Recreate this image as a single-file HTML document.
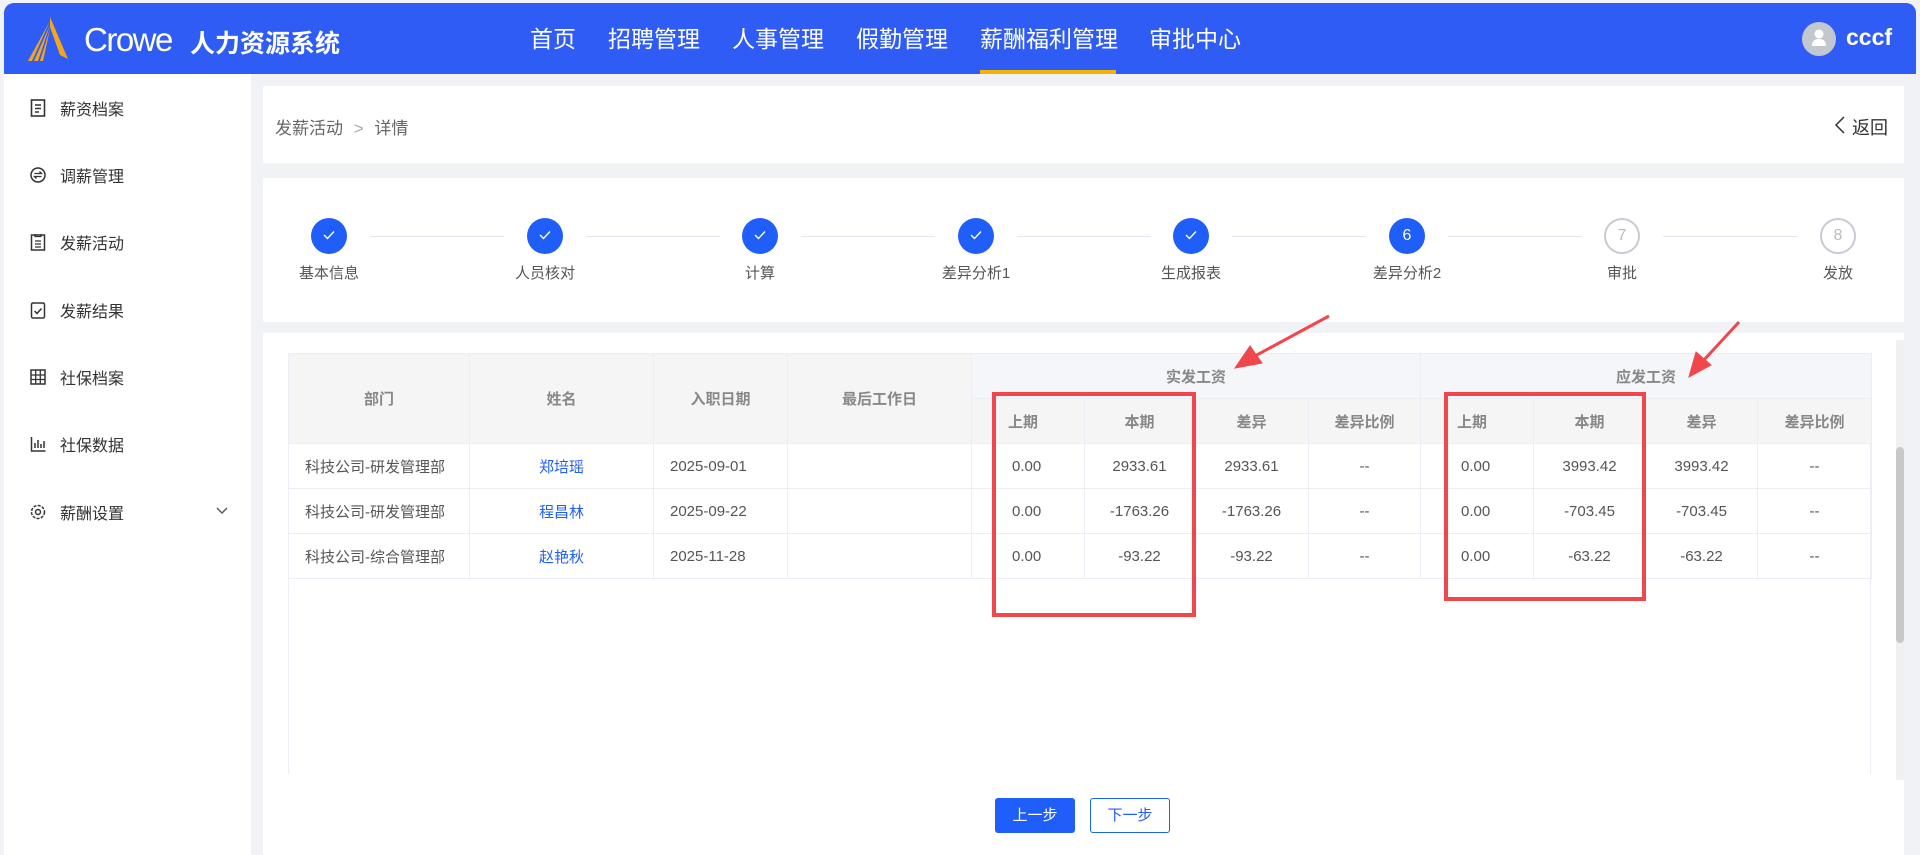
<!DOCTYPE html>
<html><head><meta charset="utf-8"><style>
*{margin:0;padding:0;box-sizing:border-box}
body{width:1920px;height:855px;overflow:hidden;background:#f0f2f5;font-family:"Liberation Sans","Noto Sans CJK SC",sans-serif;position:relative;color:#333}
.abs{position:absolute}
.hdr{left:4px;top:3px;width:1912px;height:71px;background:#305cf6;border-radius:10px 10px 0 0}
.nav{top:20px;color:#fff;font-size:23px;position:absolute}
.side{left:4px;top:74px;width:247px;height:781px;background:#fff}
.mi{position:absolute;left:30px;font-size:16px;color:#333;display:flex;align-items:center}
.mi svg{margin-right:14px}
.card{background:#fff;position:absolute}
.st{position:absolute;width:36px;height:36px;border-radius:50%;top:218px;text-align:center;line-height:36px;font-size:16px;color:#fff;background:#1f5ef9}
.st svg{margin-top:11px}
.st.g{background:#fff;border:2px solid #c6cad3;color:#bbb;line-height:32px}
.sl{position:absolute;top:262px;font-size:15px;color:#555;width:160px;text-align:center}
.ln{position:absolute;top:236px;height:1px;background:#e4e6ee}
table{border-collapse:collapse;position:absolute;left:288px;top:353px;font-size:15px;table-layout:fixed}
td,th{border:1px solid #ebeef5;height:45px;text-align:center;color:#555;font-weight:normal}
th{background:#f5f5f5;color:#888;font-weight:bold}
th.g{background:#f5f6fa}
td.l{text-align:left;padding-left:16px}
td.b{color:#1f5ef9}
.btn{position:absolute;top:798px;height:35px;width:80px;border-radius:3px;font-size:15px;text-align:center;line-height:33px}
</style></head><body>
<div class="abs hdr"></div>
<svg class="abs" style="left:26px;top:17px" width="46" height="44" viewBox="0 0 46 44"><path d="M24 0 L42 42 L34 38 L24 10 Z" fill="#f4a51c"/><path d="M24 4 L2 44 L6 44 Z M24 8 L8 44 L12 44 Z M24 12 L14 44 L17 44Z" fill="#f4a51c"/></svg>
<div class="abs" style="left:84px;top:22px;color:#fff;font-size:33px;letter-spacing:-1.5px;line-height:36px">Crowe</div>
<div class="abs" style="left:190px;top:24px;color:#fff;font-size:25px;font-weight:bold">人力资源系统</div>
<div class="nav" style="left:530px">首页</div>
<div class="nav" style="left:608px">招聘管理</div>
<div class="nav" style="left:732px">人事管理</div>
<div class="nav" style="left:856px">假勤管理</div>
<div class="nav" style="left:980px">薪酬福利管理</div>
<div class="abs" style="left:980px;top:70px;width:136px;height:4px;background:#f5b400"></div>
<div class="nav" style="left:1149px">审批中心</div>
<div class="abs" style="left:1802px;top:22px;width:34px;height:34px;border-radius:50%;background:#c3c7d0"></div>
<svg class="abs" style="left:1810px;top:28px" width="18" height="20"><circle cx="9" cy="6" r="4.5" fill="#fff"/><path d="M2 18 Q2 11 9 11 Q16 11 16 18Z" fill="#fff"/></svg>
<div class="abs" style="left:1846px;top:24px;color:#fff;font-size:23px;font-weight:bold">cccf</div>

<div class="abs side"></div>
<div class="mi" style="top:96px"><svg width="16" height="18"><rect x="1.5" y="1" width="13" height="16" fill="none" stroke="#333" stroke-width="1.6"/><path d="M5 6h6M5 9.5h6M5 13h4" stroke="#333" stroke-width="1.4"/></svg>薪资档案</div>
<div class="mi" style="top:163px"><svg width="16" height="18"><circle cx="8" cy="9" r="7" fill="none" stroke="#333" stroke-width="1.5"/><path d="M4.5 7.5h7l-2-2M11.5 10.5h-7l2 2" fill="none" stroke="#333" stroke-width="1.3"/></svg>调薪管理</div>
<div class="mi" style="top:230px"><svg width="16" height="18"><rect x="1.5" y="2" width="13" height="15" fill="none" stroke="#333" stroke-width="1.5"/><path d="M5 1v2.5h6V1M5 8h6M5 11h6M5 14h6" stroke="#333" stroke-width="1.3" fill="none"/></svg>发薪活动</div>
<div class="mi" style="top:298px"><svg width="16" height="18"><rect x="1.5" y="2" width="13" height="15" rx="1.5" fill="none" stroke="#333" stroke-width="1.5"/><path d="M4.5 10l2.5 2.5 4.5-5" stroke="#333" stroke-width="1.5" fill="none"/></svg>发薪结果</div>
<div class="mi" style="top:365px"><svg width="16" height="18"><rect x="1" y="2" width="14" height="14" fill="none" stroke="#333" stroke-width="1.5"/><path d="M1 7h14M1 11.5h14M5.7 2v14M10.3 2v14" stroke="#333" stroke-width="1.3"/></svg>社保档案</div>
<div class="mi" style="top:432px"><svg width="16" height="18"><path d="M1.5 2v14h14" stroke="#333" stroke-width="1.5" fill="none"/><path d="M5 13V8M8 13V5M11 13V9M14 13V6" stroke="#333" stroke-width="1.5"/></svg>社保数据</div>
<div class="mi" style="top:500px"><svg width="16" height="18"><circle cx="8" cy="9" r="6.5" fill="none" stroke="#333" stroke-width="1.5" stroke-dasharray="3 1.3"/><circle cx="8" cy="9" r="2.5" fill="none" stroke="#333" stroke-width="1.4"/></svg>薪酬设置</div>
<svg class="abs" style="left:216px;top:507px" width="12" height="8"><path d="M1 1l5 5 5-5" stroke="#555" stroke-width="1.4" fill="none"/></svg>

<div class="card" style="left:263px;top:86px;width:1641px;height:77px"></div>
<div class="abs" style="left:275px;top:114px;font-size:17px;color:#666">发薪活动 <span style="color:#aaa;margin:0 6px">&gt;</span> 详情</div>
<svg class="abs" style="left:1834px;top:116px" width="12" height="18"><path d="M10 1L2 9l8 8" stroke="#333" stroke-width="1.5" fill="none"/></svg>
<div class="abs" style="left:1852px;top:114px;font-size:18px;color:#333">返回</div>

<div class="card" style="left:263px;top:178px;width:1641px;height:144px"></div>
<div class="ln" style="left:370px;width:134px"></div><div class="ln" style="left:586px;width:134px"></div><div class="ln" style="left:801px;width:134px"></div><div class="ln" style="left:1017px;width:134px"></div><div class="ln" style="left:1232px;width:134px"></div><div class="ln" style="left:1448px;width:134px"></div><div class="ln" style="left:1663px;width:134px"></div>
<div class="st" style="left:311px"><svg width="14" height="12"><path d="M2 6l3.5 3.5L12 2.5" stroke="#fff" stroke-width="1.4" fill="none"/></svg></div><div class="st" style="left:527px"><svg width="14" height="12"><path d="M2 6l3.5 3.5L12 2.5" stroke="#fff" stroke-width="1.4" fill="none"/></svg></div><div class="st" style="left:742px"><svg width="14" height="12"><path d="M2 6l3.5 3.5L12 2.5" stroke="#fff" stroke-width="1.4" fill="none"/></svg></div><div class="st" style="left:958px"><svg width="14" height="12"><path d="M2 6l3.5 3.5L12 2.5" stroke="#fff" stroke-width="1.4" fill="none"/></svg></div><div class="st" style="left:1173px"><svg width="14" height="12"><path d="M2 6l3.5 3.5L12 2.5" stroke="#fff" stroke-width="1.4" fill="none"/></svg></div><div class="st" style="left:1389px">6</div><div class="st g" style="left:1604px">7</div><div class="st g" style="left:1820px">8</div>
<div class="sl" style="left:249px">基本信息</div><div class="sl" style="left:465px">人员核对</div><div class="sl" style="left:680px">计算</div><div class="sl" style="left:896px">差异分析1</div><div class="sl" style="left:1111px">生成报表</div><div class="sl" style="left:1327px">差异分析2</div><div class="sl" style="left:1542px">审批</div><div class="sl" style="left:1758px">发放</div>

<div class="card" style="left:263px;top:333px;width:1641px;height:522px"></div>
<div class="abs" style="left:1896px;top:340px;width:8px;height:440px;background:#f0f0f0"></div>
<div class="abs" style="left:1896px;top:447px;width:8px;height:196px;background:#c8c8c8;border-radius:4px"></div>
<div class="abs" style="left:288px;top:353px;width:1583px;height:421px;border:1px solid #ebeef5;border-bottom:none"></div>
<table>
<colgroup><col style="width:181px"><col style="width:184px"><col style="width:134px"><col style="width:184px"><col style="width:113px"><col style="width:110px"><col style="width:114px"><col style="width:112px"><col style="width:113px"><col style="width:112px"><col style="width:112px"><col style="width:114px"></colgroup>
<tr><th rowspan="2" style="height:89px">部门</th><th rowspan="2">姓名</th><th rowspan="2">入职日期</th><th rowspan="2">最后工作日</th><th colspan="4" class="g" style="height:44px">实发工资</th><th colspan="4" class="g">应发工资</th></tr>
<tr><th style="text-align:left;padding-left:36px">上期</th><th>本期</th><th>差异</th><th>差异比例</th><th style="text-align:left;padding-left:36px">上期</th><th>本期</th><th>差异</th><th>差异比例</th></tr>
<tr><td class="l">科技公司-研发管理部</td><td class="b">郑培瑶</td><td class="l">2025-09-01</td><td></td><td class="l" style="padding-left:40px">0.00</td><td>2933.61</td><td>2933.61</td><td>--</td><td class="l" style="padding-left:40px">0.00</td><td>3993.42</td><td>3993.42</td><td>--</td></tr>
<tr><td class="l">科技公司-研发管理部</td><td class="b">程昌林</td><td class="l">2025-09-22</td><td></td><td class="l" style="padding-left:40px">0.00</td><td>-1763.26</td><td>-1763.26</td><td>--</td><td class="l" style="padding-left:40px">0.00</td><td>-703.45</td><td>-703.45</td><td>--</td></tr>
<tr><td class="l">科技公司-综合管理部</td><td class="b">赵艳秋</td><td class="l">2025-11-28</td><td></td><td class="l" style="padding-left:40px">0.00</td><td>-93.22</td><td>-93.22</td><td>--</td><td class="l" style="padding-left:40px">0.00</td><td>-63.22</td><td>-63.22</td><td>--</td></tr>
</table>
<div class="abs" style="left:992px;top:392px;width:204px;height:225px;border:4px solid #f0474c"></div>
<div class="abs" style="left:1444px;top:392px;width:202px;height:209px;border:4px solid #f0474c"></div>
<svg class="abs" style="left:0;top:0" width="1920" height="855"><g fill="#f0474c" stroke="#f0474c"><line x1="1329" y1="316" x2="1255" y2="356" stroke-width="3"/><path d="M1235 368 L1250 346 L1262 363Z"/><line x1="1739" y1="322" x2="1703" y2="361" stroke-width="3"/><path d="M1689 377 L1696 352 L1711 365Z"/></g></svg>

<div class="btn" style="left:995px;background:#1f5ef9;color:#fff;border:1px solid #1f5ef9">上一步</div>
<div class="btn" style="left:1090px;background:#fff;color:#1f5ef9;border:1px solid #1f5ef9">下一步</div>
</body></html>
